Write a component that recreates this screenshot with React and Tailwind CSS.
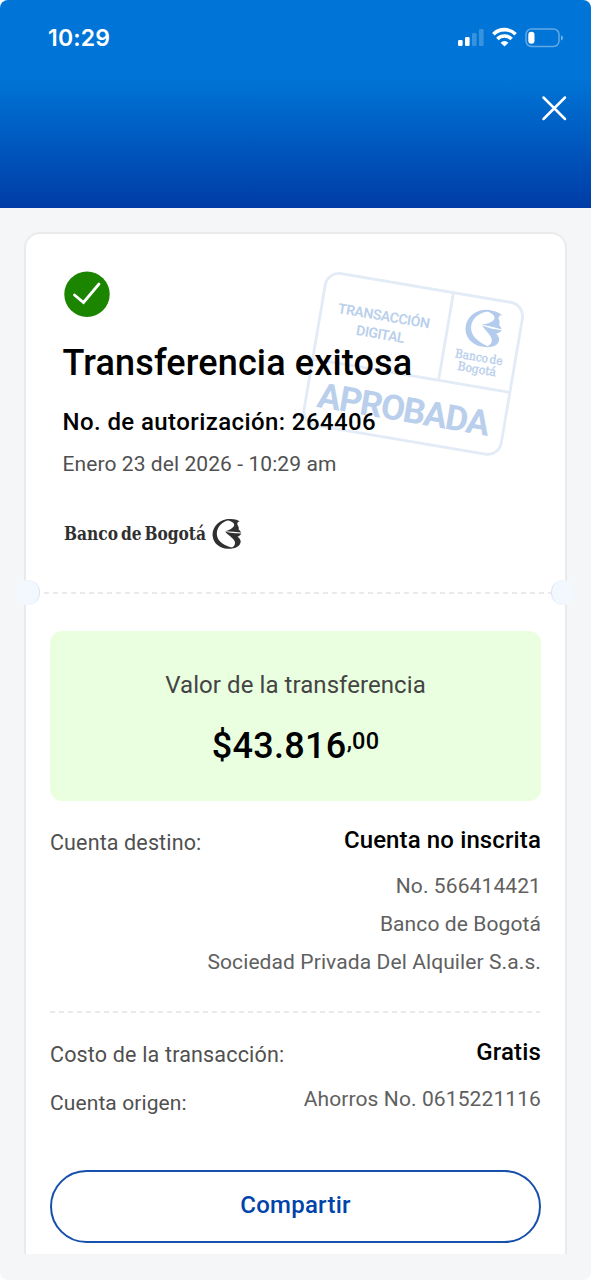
import React from 'react';

function BankMark({ className, ...rest }) {
  return (
    <svg viewBox="0 0 110 112" className={className} fill="currentColor" {...rest}>
      <path d="M66 0C28 0 0 28 1 61c2 31 28 50 57 50 8 0 14-1 19-4C48 101 19 86 17 57 16 31 36 9 66 3Z" />
      <path d="M50 3c16-5 36-4 52 5-9 3-10 9-7 15 4 6 5 10 3 15 4 3 7 7 10 12-20-2-40-2-60-4 14-3 24-9 31-17 9-11-4-21-29-26Z" />
      <path d="M48 48c18 4 32 6 44 5l17 1c-4 6-9 10-15 12 8 5 12 11 12 18 0 17-19 27-43 27 14-3 22-11 22-21 0-15-20-24-37-42Z" />
    </svg>
  );
}

function Stamp() {
  return (
    <svg viewBox="290 260 250 210" className="absolute left-[264px] top-[26px] h-[210px] w-[250px]">
      <g transform="translate(327.6 271.2) rotate(9.65)" fontFamily="Roboto, sans-serif" textAnchor="middle" fill="#b9cfeb">
        <g fill="none" stroke="#e3ebf7" strokeWidth="2.8">
          <rect x="0" y="0" width="200" height="154" rx="14" />
          <path d="M0 89H200M127.7 0V89" />
        </g>
        <text x="63" y="39.5" fontSize="14" fontWeight="600" textLength="93">TRANSACCIÓN</text>
        <text x="62.7" y="58" fontSize="14" fontWeight="600" textLength="49">DIGITAL</text>
        <text x="98.3" y="135.5" fontSize="35" fontWeight="700" textLength="174">APROBADA</text>
        <g color="#b3cbec">
          <BankMark x="145" y="11" width="37" height="38" />
        </g>
        <g fontFamily="'DejaVu Serif', serif" fontSize="12" stroke="#b9cfeb" strokeWidth=".4">
          <text x="163.6" y="63.5" textLength="48" lengthAdjust="spacingAndGlyphs" wordSpacing="-2">Banco de</text>
          <text x="163.6" y="75.5" textLength="39" lengthAdjust="spacingAndGlyphs">Bogotá</text>
        </g>
      </g>
    </svg>
  );
}

function StatusIcons() {
  return (
    <svg viewBox="456 24 110 28" className="h-7 w-[110px]" fill="#fff">
      <rect x="458" y="40" width="4.6" height="6" rx="1.2" />
      <rect x="465" y="37" width="4.6" height="9" rx="1.2" />
      <rect x="472" y="33" width="4.6" height="13" rx="1.2" opacity=".22" />
      <rect x="479" y="29" width="4.6" height="17" rx="1.2" opacity=".22" />
      <g fill="none" stroke="#fff" strokeWidth="3.6">
        <path d="M493.4 34.2a15.8 15.8 0 0 1 22.2 0" />
        <path d="M497.4 39a10 10 0 0 1 14.2 0" />
      </g>
      <path d="M500.6 42.7a5.6 5.6 0 0 1 7.8 0l-3.9 3.9Z" />
      <rect x="526" y="29" width="33" height="17.5" rx="5.5" fill="none" stroke="#fff" strokeOpacity=".38" strokeWidth="1.5" />
      <rect x="528.3" y="31.8" width="6.2" height="12" rx="3" />
      <path d="M561 35.2c2.6.8 2.6 4.4 0 5.2Z" opacity=".45" />
    </svg>
  );
}

function Dashes({ className }) {
  return (
    <svg className={className} preserveAspectRatio="none">
      <path d="M0 1H600" stroke="#e2e4e7" strokeWidth="1.5" strokeDasharray="5 4" />
    </svg>
  );
}

function Row({ label, value, className, labelClass, valueClass }) {
  return (
    <div className={`flex items-start justify-between whitespace-nowrap leading-[28px] ${className}`}>
      <span className={labelClass}>{label}</span>
      <span className={valueClass}>{value}</span>
    </div>
  );
}

export default function App() {
  return (
    <div className="h-[1280px] w-[591px] overflow-hidden rounded-[8px] bg-[#f5f6f8] font-[Roboto,sans-serif] text-black">
      <header className="h-[208px] bg-[linear-gradient(180deg,#0075d7_0%,#0075d7_37%,#003ca6_100%)]">
        <div className="flex h-[76px] items-center justify-between pr-[25px] pl-[48px]">
          <span className="font-[Inter,sans-serif] text-[23px] font-semibold tracking-[0.2px] text-white">10:29</span>
          <StatusIcons />
        </div>
        <div className="flex justify-end pt-[19px] pr-[24px]">
          <svg viewBox="0 0 26 26" className="size-[26px]" stroke="#fff" strokeWidth="2.5" strokeLinecap="round">
            <path d="M2.5 2.5l21.5 21.5M24 2.5L2.5 24" />
          </svg>
        </div>
      </header>

      <main className="px-6 pt-6">
        <div className="relative h-[1022px] w-[543px] rounded-t-[16px] border-2 border-b-0 border-[#e9eaec] bg-white">
          <Stamp />
          <section className="relative h-[314px] pt-[37px] pl-[36.5px] whitespace-nowrap">
            <svg viewBox="0 0 46 46" className="ml-[1px] size-[46px]">
              <circle cx="23" cy="23.3" r="22.7" fill="#1c8500" />
              <path d="M10.5 24l9 7.5L35 13" fill="none" stroke="#fff" strokeWidth="2.8" strokeLinecap="round" />
            </svg>
            <h1 className="mt-[24px] text-[36px] leading-[44px] font-medium tracking-[0.14px]">Transferencia exitosa</h1>
            <p className="mt-[22px] text-[24px] leading-[30px] font-medium tracking-[0.41px]">No. de autorización: 264406</p>
            <p className="mt-[14px] text-[21px] leading-[26px] tracking-[0.08px] text-[#505050]">Enero 23 del 2026 - 10:29 am</p>
          </section>
          <div className="absolute top-[285px] left-[38px] flex items-center gap-[5px] text-[#303030]">
            <svg viewBox="0 0 160 30" className="mr-[-17px] h-[30px] w-[160px] overflow-visible" fill="currentColor">
              <text x="0" y="21" textLength="142" lengthAdjust="spacingAndGlyphs" fontFamily="'DejaVu Serif', serif" fontWeight="700" fontSize="18.5" wordSpacing="-3">Banco de Bogotá</text>
            </svg>
            <BankMark className="h-[30px] w-[30px]" />
          </div>

          <div className="absolute top-[346px] left-[-10px] h-[25px] w-[24px] rounded-full border-r-[1.5px] border-[#d8e5f6] bg-[#f3f7fe]" />
          <div className="absolute top-[346px] right-[-10px] h-[25px] w-[24px] rounded-full border-l-[1.5px] border-[#d8e5f6] bg-[#f3f7fe]" />
          <Dashes className="ml-[18px] mt-[44px] h-[2px] w-[508px]" />

          <section className="mt-[36.5px] px-6">
            <div className="flex h-[170px] flex-col items-center rounded-[12px] bg-[#e9ffe0] pt-[39px] whitespace-nowrap">
              <p className="text-[24px] leading-[30px] tracking-[0.07px] text-[#444]">Valor de la transferencia</p>
              <p className="mt-[24px] flex items-start text-[36px] leading-[44px] font-medium tracking-[0.3px]">
                $43.816<span className="text-[23.5px] leading-[35px] tracking-[0.2px]">,00</span>
              </p>
            </div>
            <Row className="mt-[25px]" label="Cuenta destino:" value="Cuenta no inscrita" labelClass="pt-[3px] text-[21.5px] tracking-[0.13px] text-[#505050]" valueClass="text-[24px] font-medium tracking-[0.12px]" />
            <div className="mt-[10px] text-right text-[21px] leading-[38px] tracking-[0.1px] text-[#606060]">
              <p>No. 566414421</p>
              <p>Banco de Bogotá</p>
              <p>Sociedad Privada Del Alquiler S.a.s.</p>
            </div>
            <Dashes className="mt-[30.5px] h-[2px] w-[490px]" />
            <Row className="mt-[24.5px]" label="Costo de la transacción:" value="Gratis" labelClass="pt-[3px] text-[21.5px] tracking-[0.17px] text-[#505050]" valueClass="text-[24px] font-medium tracking-[0.15px]" />
            <Row className="mt-[16px]" label="Cuenta origen:" value="Ahorros No. 0615221116" labelClass="pt-[4px] text-[21px] tracking-[0.1px] text-[#505050]" valueClass="text-[21px] tracking-[0.1px] text-[#606060]" />
            <button className="mt-[53.5px] block h-[73px] w-full rounded-full border-2 border-[#1650ac] pb-1 text-[24px] font-medium tracking-[0.25px] text-[#0043a9]">Compartir</button>
          </section>
        </div>
      </main>
    </div>
  );
}
